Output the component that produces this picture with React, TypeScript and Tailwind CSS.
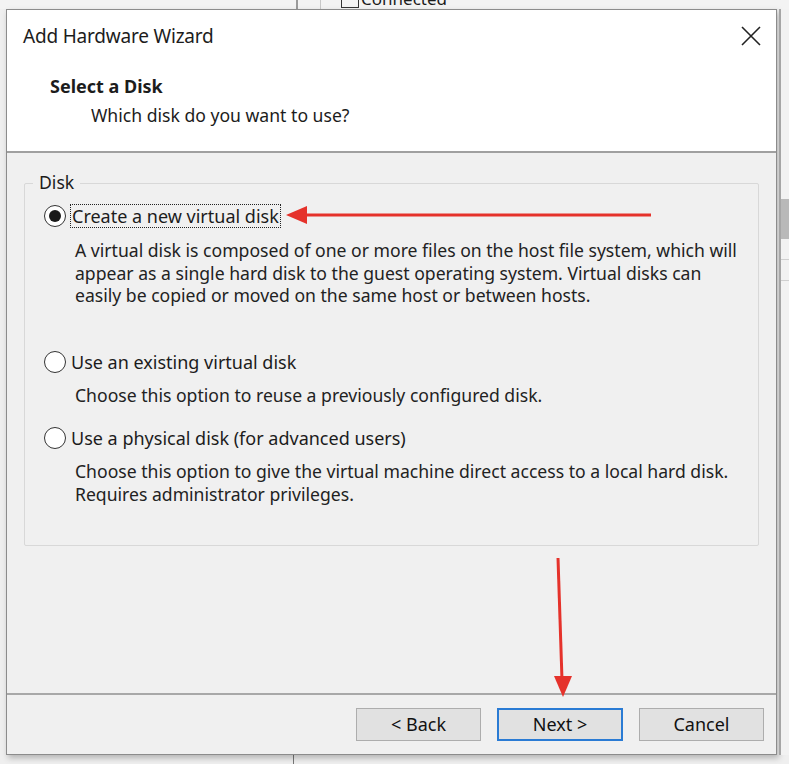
import React from 'react';

function Radio({ checked }: { checked?: boolean }) {
  return (
    <span className="flex h-[22px] w-[22px] shrink-0 items-center justify-center rounded-full border-[1.5px] border-[#333] bg-white">
      {checked && <span className="h-[12px] w-[12px] rounded-full bg-[#1a1a1a]" />}
    </span>
  );
}

function Option({
  label,
  lines,
  checked,
  focused,
  className,
}: {
  label: string;
  lines: string[];
  checked?: boolean;
  focused?: boolean;
  className?: string;
}) {
  return (
    <div className={'flex flex-col ' + (className ?? '')}>
      <div className="flex items-center gap-[4px]">
        <Radio checked={checked} />
        <span
          className={
            focused
              ? 'border border-dotted border-[#222] px-[1px] text-[18px] leading-[22px]'
              : 'px-[1px] text-[18px] leading-[22px]'
          }
        >
          {label}
        </span>
      </div>
      <div className="mt-[11px] pl-[31px] leading-[22.5px] text-[#222]">
        {lines.map((l) => (
          <div key={l}>{l}</div>
        ))}
      </div>
    </div>
  );
}

function Button({ children, primary }: { children: React.ReactNode; primary?: boolean }) {
  return (
    <button
      className={
        primary
          ? 'h-[33px] w-[126px] border-2 border-[#2a7bd4] bg-[#e1e1e1] text-[18px] text-[#111]'
          : 'h-[33px] w-[125px] border border-[#adadad] bg-[#e1e1e1] text-[18px] text-[#111]'
      }
    >
      {children}
    </button>
  );
}

export default function App() {
  return (
    <div
      className="relative h-[764px] w-[789px] overflow-hidden bg-[#efefef] text-[17.6px] text-[#1c1c1c]"
      style={{ fontFamily: '"Noto Sans", "Open Sans", Arial, sans-serif' }}
    >
      {/* window behind */}
      <div className="flex h-[9px] overflow-hidden bg-[#f3f3f3]">
        <div className="ml-[296px] h-full w-[2px] bg-[#9a9a9a]" />
        <div className="ml-[22px] h-full w-[1px] bg-[#c8c8c8]" />
        <div className="-mt-[12px] ml-[20px] flex items-center gap-[2px] text-[17px] leading-[20px]">
          <span className="h-[18px] w-[18px] border border-[#333]" />
          <span>Connected</span>
        </div>
      </div>

      <div className="flex">
        {/* dialog */}
        <div className="ml-[6px] flex h-[746px] w-[771px] flex-col border border-[#8c8c8c] bg-[#f0f0f0] shadow-[2px_3px_6px_rgba(0,0,0,0.25)]">
          <div className="flex h-[143px] flex-col border-b-2 border-[#a0a0a0] bg-white">
            <div className="flex h-[52px] items-center justify-between pl-[16px] pr-[14px]">
              <span className="text-[19px] tracking-[-0.2px]">Add Hardware Wizard</span>
              <svg width="22" height="22" viewBox="0 0 22 22" className="text-[#222]">
                <path d="M2 2 L20 20 M20 2 L2 20" stroke="currentColor" strokeWidth="1.6" />
              </svg>
            </div>
            <div className="mt-[12px] pl-[43px] text-[18px] font-bold leading-[24px]">Select a Disk</div>
            <div className="mt-[5px] pl-[84px] leading-[24px]">Which disk do you want to use?</div>
          </div>

          <div className="flex flex-1 flex-col">
            <div className="relative mx-[17px] mt-[30px] h-[363px] rounded-[2px] border border-[#d8d8d8] px-[19px] pt-[20px]">
              <span className="absolute -top-[13px] left-[8px] bg-[#f0f0f0] px-[6px] leading-[22px]">Disk</span>
              <div className="flex flex-col">
                <Option
                  checked
                  focused
                  label="Create a new virtual disk"
                  lines={[
                    'A virtual disk is composed of one or more files on the host file system, which will',
                    'appear as a single hard disk to the guest operating system. Virtual disks can',
                    'easily be copied or moved on the same host or between hosts.',
                  ]}
                />
                <Option
                  className="mt-[44px]"
                  label="Use an existing virtual disk"
                  lines={['Choose this option to reuse a previously configured disk.']}
                />
                <Option
                  className="mt-[21px]"
                  label="Use a physical disk (for advanced users)"
                  lines={[
                    'Choose this option to give the virtual machine direct access to a local hard disk.',
                    'Requires administrator privileges.',
                  ]}
                />
              </div>
            </div>
            <div className="flex-1" />
            <div className="flex h-[61px] items-center justify-end gap-[16px] border-t-2 border-[#a8a8a8] pr-[12px]">
              <Button>&lt; Back</Button>
              <Button primary>Next &gt;</Button>
              <Button>Cancel</Button>
            </div>
          </div>
        </div>

        {/* window behind, right edge */}
        <div className="ml-[2px] flex w-[10px] flex-col border-l-2 border-[#a6a6a6] bg-[#f2f2f2] pt-[190px]">
          <div className="h-[40px] bg-[#b9b9b9]" />
          <div className="mt-[20px] h-[1px] bg-[#cfcfcf]" />
          <div className="mt-[20px] h-[1px] bg-[#cfcfcf]" />
        </div>
      </div>

      <div className="ml-[293px] h-[20px] w-[1px] bg-[#777]" />

      {/* annotation arrows */}
      <svg className="pointer-events-none absolute left-0 top-0" width="789" height="764">
        <line x1="651" y1="215" x2="300" y2="215" stroke="#e5322b" strokeWidth="3" />
        <polygon points="286,215 307,206 307,224" fill="#e5322b" />
        <line x1="558" y1="558" x2="562" y2="680" stroke="#e5322b" strokeWidth="3" />
        <polygon points="563,697 554,676 572,676" fill="#e5322b" />
      </svg>
    </div>
  );
}
